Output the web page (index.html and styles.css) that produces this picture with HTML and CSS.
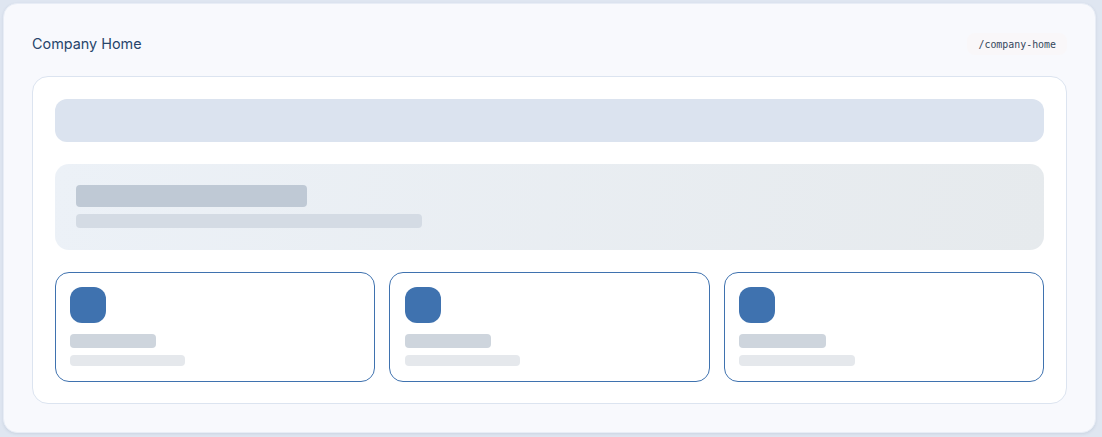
FILE: index.html
```html
<!DOCTYPE html>
<html lang="en">
<head>
    <meta charset="UTF-8">
    <meta name="viewport" content="width=device-width, initial-scale=1.0">
    <title>Company Home</title>
    <link rel="stylesheet" href="styles.css">
</head>
<body>
    <div class="panel">
        <div class="panel-header">
            <span class="page-title">Company Home</span>
            <code class="route-tag">/company-home</code>
        </div>
        <div class="frame">
            <div class="nav-skeleton"></div>
            <div class="hero-skeleton">
                <div class="hero-title"></div>
                <div class="hero-text"></div>
            </div>
            <div class="card-grid">
                <div class="card">
                    <div class="card-icon"></div>
                    <div class="card-title"></div>
                    <div class="card-text"></div>
                </div>
                <div class="card">
                    <div class="card-icon"></div>
                    <div class="card-title"></div>
                    <div class="card-text"></div>
                </div>
                <div class="card">
                    <div class="card-icon"></div>
                    <div class="card-title"></div>
                    <div class="card-text"></div>
                </div>
            </div>
        </div>
    </div>
</body>
</html>
```

FILE: styles.css
```css
* {
    box-sizing: border-box;
}
body {
    margin: 0;
    padding: 3px 6px 4px 3px;
    height: 437px;
    background-color: #dfe6f1;
    font-family: Inter, "Liberation Sans", sans-serif;
}
.panel {
    height: 430px;
    padding: 28px;
    background-color: #f8f9fd;
    border-radius: 14px;
    border: 1px solid #e8edf6;
    box-shadow: 0 1px 3px rgba(30, 58, 95, 0.1);
}
.panel-header {
    display: flex;
    justify-content: space-between;
    align-items: center;
    height: 24px;
    margin-bottom: 20px;
}
.page-title {
    padding-bottom: 2px;
    font-size: 14.4px;
    color: #27456b;
}
.route-tag {
    padding: 6px 11px 4px;
    font-family: "DejaVu Sans Mono", monospace;
    font-size: 9.92px;
    line-height: 12px;
    color: #34465c;
    background-color: #f9f7f9;
    border-radius: 8px;
}
.frame {
    padding: 22px 21.8px 21px;
    background-color: #fff;
    border: 1px solid #dce4f0;
    border-radius: 16px;
}
.nav-skeleton {
    height: 43px;
    margin-bottom: 22px;
    background-color: #dbe3ef;
    border-radius: 12px;
}
.hero-skeleton {
    height: 86px;
    margin-bottom: 22px;
    padding: 21px;
    background: linear-gradient(100deg, #ecf1f7, #e6eaed);
    border-radius: 14px;
}
.hero-title {
    width: 231px;
    height: 22px;
    margin-bottom: 7px;
    background-color: #bfc9d5;
    border-radius: 4px;
}
.hero-text {
    width: 346px;
    height: 14px;
    background-color: #d4dbe4;
    border-radius: 4px;
}
.card-grid {
    display: grid;
    grid-template-columns: repeat(3, 1fr);
    gap: 14.4px;
}
.card {
    height: 110px;
    padding: 14.4px;
    border: 1px solid #3f72af;
    border-radius: 14px;
}
.card-icon {
    width: 36px;
    height: 36px;
    margin-bottom: 11px;
    background-color: #3f72af;
    border-radius: 12px;
}
.card-title {
    width: 86.2px;
    height: 14px;
    margin-bottom: 7px;
    background-color: #ced5dd;
    border-radius: 4px;
}
.card-text {
    width: 115.2px;
    height: 11px;
    background-color: #e5e8ec;
    border-radius: 4px;
}
```
